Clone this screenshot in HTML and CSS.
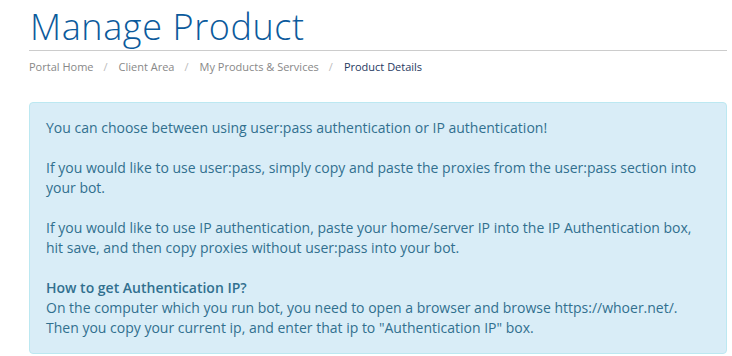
FILE: index.html
```html
<!DOCTYPE html>
<html>
<head>
<meta charset="utf-8">
<link rel="stylesheet" href="styles.css">
</head>
<body>
<div class="page">
  <div class="header-lined">
    <h1>Manage Product</h1>
  </div>
  <ol class="breadcrumb">
    <li><a href="#">Portal Home</a></li>
    <li><a href="#">Client Area</a></li>
    <li><a href="#">My Products &amp; Services</a></li>
    <li class="active">Product Details</li>
  </ol>
  <div class="alert">
    <p>You can choose between using user:pass authentication or IP authentication!</p>
    <p>If you would like to use user:pass, simply copy and paste the proxies from the user:pass section into your bot.</p>
    <p>If you would like to use IP authentication, paste your home/server IP into the IP Authentication box, hit save, and then copy proxies without user:pass into your bot.</p>
    <p><strong>How to get Authentication IP?</strong><br>On the computer which you run bot, you need to open a browser and browse https://whoer.net/.<br>Then you copy your current ip, and enter that ip to "Authentication IP" box.</p>
  </div>
</div>
</body>
</html>
```

FILE: styles.css
```css
html, body {
  margin: 0;
  padding: 0;
  background: #fff;
}
body {
  font-family: "Open Sans", "DejaVu Sans", sans-serif;
  font-size: 14px;
  line-height: 20px;
  color: #333;
}
.page {
  width: 698px;
  padding-left: 29px;
}
.header-lined {
  border-bottom: 1px solid #cccccc;
  height: 50px;
}
.header-lined h1 {
  margin: 0;
  padding-top: 5px;
  font-family: "Open Sans", sans-serif;
  font-weight: 300;
  font-size: 36px;
  line-height: 44px;
  color: #0b5a9c;
  padding-left: 1px;
  letter-spacing: 0.6px;
}
.breadcrumb {
  list-style: none;
  margin: 0;
  padding: 7px 0 0 0;
  height: 44px;
  display: flex;
  font-size: 11px;
  line-height: 18px;
}
.breadcrumb li {
  color: #888;
}
.breadcrumb li a {
  color: #888;
  text-decoration: none;
}
.breadcrumb li + li::before {
  content: "/";
  color: #bbb;
  padding: 0 11px 0 10px;
}
.breadcrumb li.active {
  color: #1f3a5f;
}
.alert {
  background: #d9edf7;
  border: 1px solid #bce8f1;
  border-radius: 4px;
  color: #31708f;
  padding: 15px 15px 15px 16px;
}
.alert p {
  margin: 0 0 20px;
}
.alert p:last-child {
  margin-bottom: 0;
}
.alert strong {
  font-weight: 600;
}
```
